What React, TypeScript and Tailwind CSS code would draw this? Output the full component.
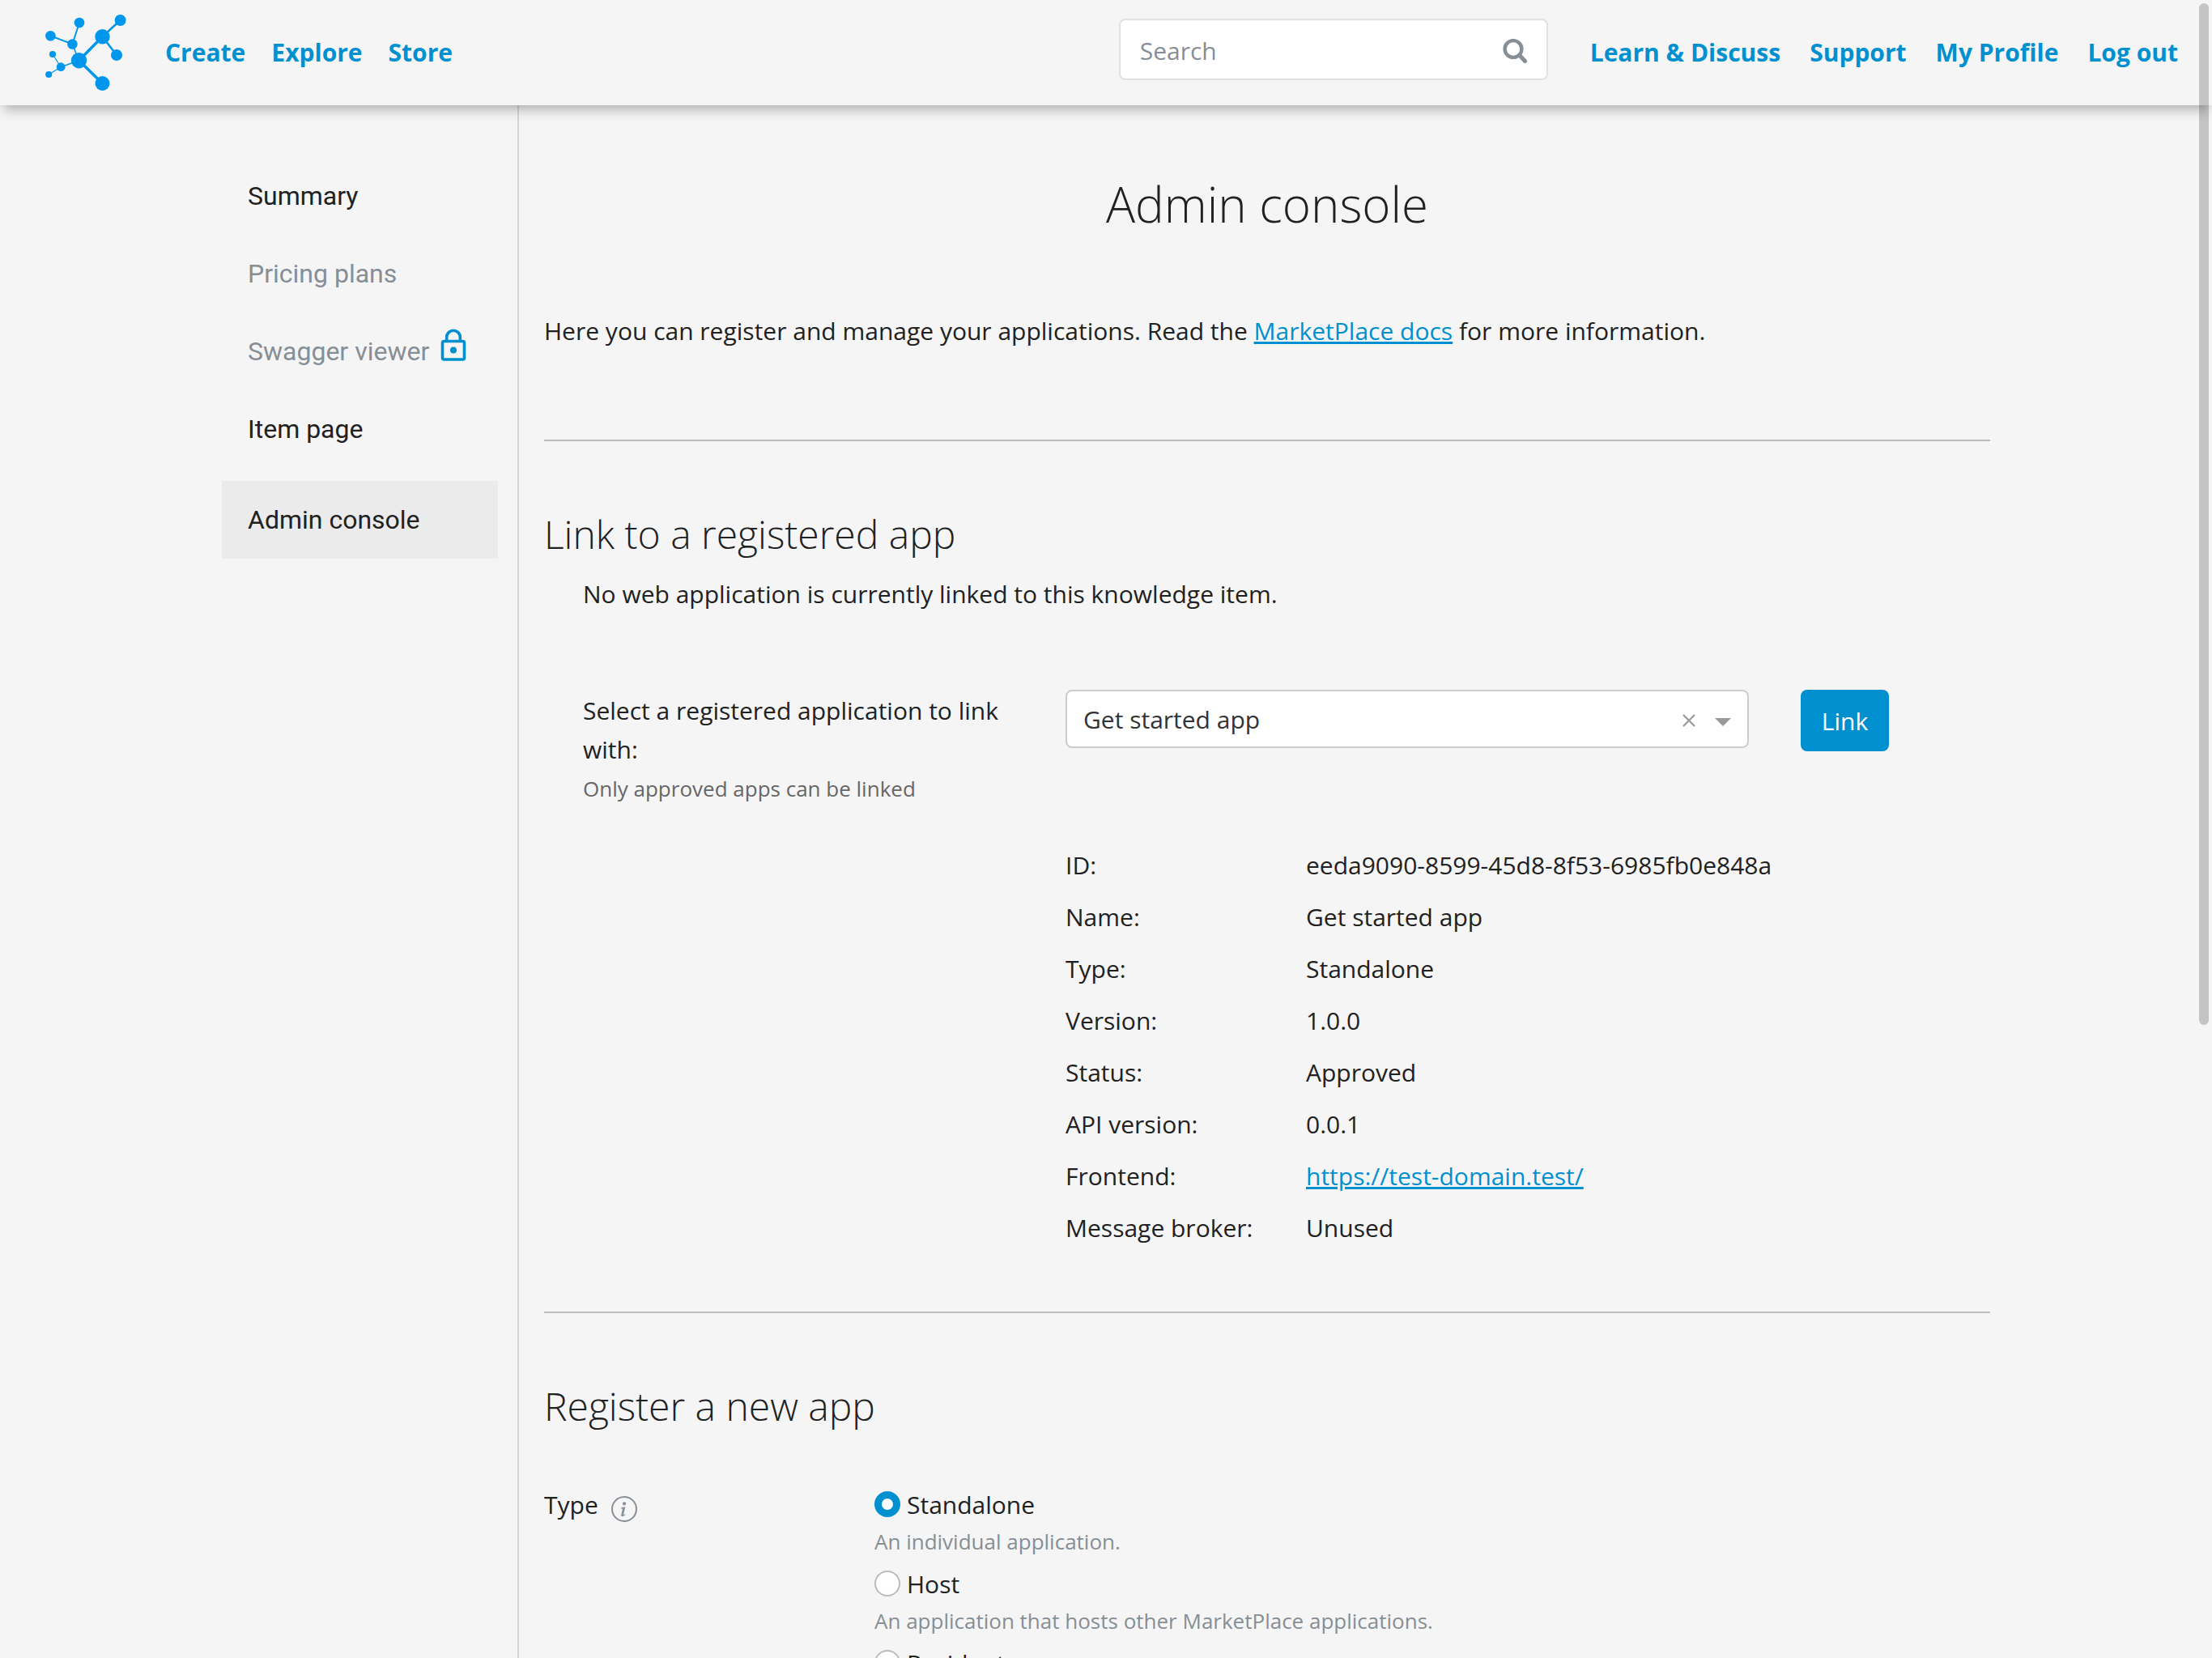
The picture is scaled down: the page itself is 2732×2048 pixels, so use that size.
import React from "react";

const topLink = "text-[#0090d0] font-bold whitespace-nowrap hover:underline";

function Logo() {
  return (
    <svg viewBox="0 0 100 94" className="h-[94px] w-[100px] shrink-0" aria-hidden="true">
      <g fill="none" stroke="#0096eb">
        <path strokeWidth="3.4" d="M41.5 56.7 70.5 27.3M41.5 56.7 70.5 85" />
        <path strokeWidth="2.6" d="M70.5 27.3 92.6 7M70.5 27.3 88 50" />
        <path strokeWidth="2" d="M6.4 26.3 33.4 36.5 42 10" />
        <path strokeWidth="1.6" d="M33.4 36.5 41.5 56.7M19.2 64.7 41.5 56.7" />
        <path strokeWidth="1.2" d="M9 49 19.2 64.7 4.2 74" />
      </g>
      <g fill="#0096eb">
        <circle cx="92.6" cy="7" r="7" />
        <circle cx="70.5" cy="27.3" r="9.2" />
        <circle cx="88" cy="50" r="7" />
        <circle cx="41.5" cy="56.7" r="9.7" />
        <circle cx="70.5" cy="85" r="9" />
        <circle cx="33.4" cy="36.5" r="6.3" />
        <circle cx="42" cy="10" r="6.3" />
        <circle cx="6.4" cy="26.3" r="6.3" />
        <circle cx="19.2" cy="64.7" r="5.4" />
        <circle cx="9" cy="49" r="4.1" />
        <circle cx="4.2" cy="74" r="4.1" />
      </g>
    </svg>
  );
}

function Header() {
  return (
    <header className="relative z-10 flex h-[130px] shrink-0 items-center justify-between bg-[#f5f5f5] pl-14 pr-[42px] shadow-[0_10px_14px_-5px_rgba(0,0,0,0.3)]">
      <nav aria-label="Main" className="flex items-center gap-8">
        <a href="#home" aria-label="Home" className="mr-4">
          <Logo />
        </a>
        <a href="#create" className={topLink}>Create</a>
        <a href="#explore" className={topLink}>Explore</a>
        <a href="#store" className={topLink}>Store</a>
      </nav>
      <div className="flex items-center gap-9">
        <form role="search" className="mr-4 mb-2 flex h-[76px] w-[530px] rounded-lg border-2 border-[#dee2e6] bg-white pt-1" onSubmit={(e) => e.preventDefault()}>
          <input type="search" aria-label="Search" placeholder="Search" className="min-w-0 flex-1 bg-transparent pl-6 outline-none placeholder:text-[#868e96]" />
          <button type="submit" aria-label="Submit search" className="flex w-[78px] items-center justify-center">
            <svg viewBox="0 0 30 30" className="size-[30px]" fill="none" stroke="#868e96" strokeLinecap="round" aria-hidden="true">
              <circle cx="13" cy="12.5" r="10.4" strokeWidth="4.4" />
              <path d="M21 20.500 27.500 27.500" strokeWidth="5" />
            </svg>
          </button>
        </form>
        <a href="#learn" className={topLink}>Learn &amp; Discuss</a>
        <a href="#support" className={topLink}>Support</a>
        <a href="#profile" className={topLink}>My Profile</a>
        <button type="button" className={topLink}>Log out</button>
      </div>
    </header>
  );
}

function LockIcon() {
  return (
    <svg viewBox="0 0 32 40" className="mb-4 h-10 w-8" fill="none" stroke="#0090d0" aria-label="Locked" role="img">
      <rect x="2.500" y="15.500" width="27" height="22.500" rx="2" strokeWidth="3.600" />
      <path d="M7.700 15V10.500a8.300 8.300 0 0 1 16.600 0V15" strokeWidth="3.600" />
      <circle cx="16" cy="26.500" r="4" fill="#0090d0" stroke="none" />
    </svg>
  );
}

function Sidebar() {
  const item = "flex h-24 items-center gap-3.5 px-8 whitespace-nowrap";
  return (
    <aside className="w-[367px] shrink-0 border-r-2 border-[#d6d6d6] pr-6 pt-16 font-['Roboto',sans-serif] text-[32px]">
      <nav aria-label="Item">
        <a href="#summary" className={item}>Summary</a>
        <a href="#pricing" className={item + " text-[#868e96]"}>Pricing plans</a>
        <a href="#swagger" className={item + " text-[#868e96]"}>
          Swagger viewer
          <LockIcon />
        </a>
        <a href="#item" className={item}>Item page</a>
        <a href="#admin" aria-current="page" className={item + " mt-4 bg-[#ebebeb]"}>Admin console</a>
      </nav>
    </aside>
  );
}

const details: [string, React.ReactNode][] = [
  ["ID:", "eeda9090-8599-45d8-8f53-6985fb0e848a"],
  ["Name:", "Get started app"],
  ["Type:", "Standalone"],
  ["Version:", "1.0.0"],
  ["Status:", "Approved"],
  ["API version:", "0.0.1"],
  ["Frontend:", <a href="#frontend" className="text-[#0090d0] underline">https://test-domain.test/</a>],
  ["Message broker:", "Unused"],
];

const types = [
  { id: "standalone", label: "Standalone", hint: "An individual application." },
  { id: "host", label: "Host", hint: "An application that hosts other MarketPlace applications." },
  { id: "resident", label: "Resident" },
];

function LinkSection() {
  return (
    <section className="pt-[79px]">
      <h2 className="text-[48px] leading-[72px] font-light">Link to a registered app</h2>
      <div className="pl-12 pt-3.5">
        <p>No web application is currently linked to this knowledge item.</p>
        <div className="mt-[94px] flex items-start">
          <div className="w-[596px] shrink-0 pr-12 pt-0.5">
            <label htmlFor="app">Select a registered application to link with:</label>
            <p className="text-[26px] text-[#666]">Only approved apps can be linked</p>
          </div>
          <div className="relative min-w-0 max-w-[844px] flex-1">
            <select id="app" className="h-[72px] w-full appearance-none rounded-lg border-2 border-[#ccc] bg-white px-5 pt-0.5 text-[#333]">
              <option>Get started app</option>
            </select>
            <button type="button" aria-label="Clear selection" className="absolute right-[66px] top-[30px] flex size-4 items-center justify-center">
              <svg viewBox="0 0 16 16" className="size-4" stroke="#999" strokeWidth="2.2" aria-hidden="true">
                <path d="M1 1 15 15M15 1 1 15" />
              </svg>
            </button>
            <svg viewBox="0 0 20 10" className="pointer-events-none absolute right-[22px] top-[35px] h-2.5 w-5" fill="#999" aria-hidden="true">
              <path d="M0 0H20L10 10Z" />
            </svg>
          </div>
          <button type="button" className="ml-16 h-[76px] w-[109px] rounded-lg bg-[#0090d0] pt-0.5 text-white">Link</button>
        </div>
        <table className="ml-[596px] mt-[39px] text-left">
          <tbody>
            {details.map(([name, value]) => (
              <tr key={name} className="h-16">
                <th scope="row" className="w-[297px] p-0 font-normal">{name}</th>
                <td className="p-0">{value}</td>
              </tr>
            ))}
          </tbody>
        </table>
      </div>
    </section>
  );
}

function RegisterSection() {
  const [type, setType] = React.useState("standalone");
  return (
    <section className="pt-[79px]">
      <h2 className="text-[48px] leading-[72px] font-light">Register a new app</h2>
      <fieldset className="mt-[62px] flex items-start">
        <legend className="float-left flex w-[408px] items-center gap-4">
          Type
          <svg viewBox="0 0 32 32" className="mt-2.5 size-8" fill="#868e96" role="img" aria-label="About types">
            <circle cx="16" cy="16" r="15" fill="none" stroke="#868e96" strokeWidth="2" />
            <circle cx="16" cy="9.300" r="2.100" />
            <path d="M12.300 14.300 17.300 13.300 15.200 22.300q-.2 1.300.6.900l1.200-.9.600.5q-2 2.400-4 2.400-1.900 0-1.300-2.300l1.500-6.400q.2-.9-.6-.9h-1z" />
          </svg>
        </legend>
        <div>
          {types.map((t) => (
            <div key={t.id} className="h-[98px]">
              <label className="flex h-12 items-center gap-2">
                <input
                  type="radio"
                  name="type"
                  checked={type === t.id}
                  onChange={() => setType(t.id)}
                  className="mb-0.5 size-8 appearance-none rounded-full border-2 border-[#bbb] bg-white checked:border-[9px] checked:border-[#0090d0]"
                />
                {t.label}
              </label>
              {t.hint && <p className="text-[26px] leading-[42px] text-[#868e96]">{t.hint}</p>}
            </div>
          ))}
        </div>
      </fieldset>
    </section>
  );
}

export default function App() {
  return (
    <div className="relative flex h-screen flex-col overflow-hidden bg-[#f5f5f5] font-['Open_Sans',sans-serif] text-[30px] leading-[48px] text-[#212121]">
      <Header />
      <div className="mx-auto flex min-h-0 w-full max-w-[2184px] flex-1">
        <Sidebar />
        <main className="min-w-0 flex-1 pl-[31px]">
          <h1 className="pt-[74px] text-center text-[60px] leading-[96px] font-light">Admin console</h1>
          <p className="mt-[85px]">
            Here you can register and manage your applications. Read the{" "}
            <a href="#docs" className="text-[#0090d0] underline">MarketPlace docs</a> for more information.
          </p>
          <hr className="mt-[110px] border-t-2 border-[#bdbdbd]" />
          <LinkSection />
          <hr className="mt-[71px] border-t-2 border-[#bdbdbd]" />
          <RegisterSection />
        </main>
      </div>
      <div aria-hidden="true" className="absolute right-1 top-1 z-20 h-[61.6%] w-3 rounded-full bg-black/20" />
    </div>
  );
}
